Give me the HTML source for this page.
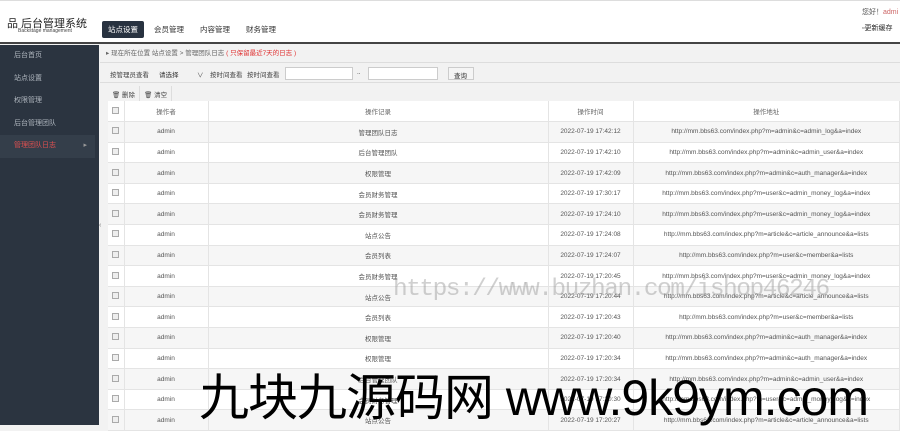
<!DOCTYPE html>
<html><head><meta charset="utf-8"><style>
*{margin:0;padding:0;box-sizing:border-box}
body{width:900px;height:425px;overflow:hidden;background:#f2f2f2;font-family:"Liberation Sans","Noto Sans CJK SC",sans-serif;font-size:7px;color:#333;position:relative}
.hdr{position:absolute;left:0;top:0;width:900px;height:44px;background:#fff;border-top:1px solid #ddd;border-bottom:2px solid #444}
.logo{position:absolute;left:7px;top:14px;font-size:11px;color:#222}
.logo small{position:absolute;left:11px;top:13px;font-size:5px;color:#444;white-space:nowrap}
.nav{position:absolute;left:102px;top:20px;display:flex;font-size:7.5px}
.nav span{padding:3px 6px;margin-right:4px;color:#333}
.nav .on{background:#283240;color:#fff;border-radius:2px}
.usr{position:absolute;left:862px;top:6px;font-size:7px;color:#555}
.usr b{color:#c66;font-weight:normal}
.upd{position:absolute;left:862px;top:22px;font-size:7px;color:#222}
.side{position:absolute;left:0;top:45px;width:99px;height:380px;background:#2b3440}
.side div{height:22.5px;line-height:22px;padding-left:14px;color:#aeb5bd;font-size:7px}
.side .act{background:#343e4a;color:#e05050;width:95px;position:relative}
.side .act:after{content:"▸";position:absolute;right:8px;color:#999}
.bc{position:absolute;left:106px;top:47px;font-size:6.5px;color:#666}
.bc i{color:#e03030;font-style:normal}
.flt{position:absolute;left:100px;top:62px;width:800px;height:21px;border-top:1px solid #ddd;border-bottom:1px solid #ddd;background:#f2f2f2}
.flt span{position:absolute;top:6px;font-size:6.5px;color:#444}
.inp{position:absolute;top:4px;height:13px;background:#fff;border:1px solid #ccc}
.tb{position:absolute;left:108px;top:86px;font-size:6.5px;color:#444}
.tb span{display:inline-block;padding:3px 4px;border-right:1px solid #ddd}
table{position:absolute;left:108px;top:101px;width:792px;border-collapse:collapse;background:#fff}
td,th{height:20.6px;border-bottom:1px solid #e4e4e4;border-right:1px solid #e4e4e4;text-align:center;font-weight:normal;font-size:6.5px;color:#555;white-space:nowrap}
th{background:#fff;color:#666}
tr:nth-child(even) td{background:#f6f6f6}
.cb{display:inline-block;width:7px;height:7px;border:1px solid #aaa;background:#eee}
.wm{position:absolute;left:393px;top:276px;font-family:"Liberation Mono",monospace;font-size:24.5px;color:rgba(150,150,150,.45);letter-spacing:-1.5px;white-space:nowrap}
.big{position:absolute;left:199px;top:358px;font-size:50px;color:#000;white-space:nowrap;letter-spacing:-1px}
</style></head><body>
<div class="hdr">
<div class="logo">品 后台管理系统<small>Backstage management</small></div>
<div class="nav"><span class="on">站点设置</span><span>会员管理</span><span>内容管理</span><span>财务管理</span></div>
<div class="usr">您好！<b>admi</b></div>
<div class="upd">▫更新缓存</div>
</div>
<div class="side"><div>后台首页</div><div>站点设置</div><div>权限管理</div><div>后台管理团队</div><div class="act">管理团队日志</div></div>
<div style="position:absolute;left:99px;top:222px;font-size:7px;color:#777">‹</div>
<div class="bc">▸ 现在所在位置 站点设置 &gt; 管理团队日志 <i>( 只保留最近7天的日志 )</i></div>
<div class="flt">
<span style="left:10px">按管理员查看</span><div class="inp" style="left:55px;width:50px;border:none;background:#f2f2f2;padding:2px 4px;font-size:6.5px">请选择 <span style="left:42px;top:2px">∨</span></div>
<span style="left:110px">按时间查看</span><span style="left:147px">按时间查看</span>
<div class="inp" style="left:185px;width:68px"></div><span style="left:257px">..</span>
<div class="inp" style="left:268px;width:70px"></div>
<div class="inp" style="left:348px;width:26px;background:#f5f5f5;font-size:6.5px;padding:2px 5px">查询</div>
</div>
<div class="tb"><span>🗑 删除</span><span>🗑 清空</span></div>
<table>
<tr><th style="width:16px"><span class="cb"></span></th><th style="width:84px">操作者</th><th style="width:340px">操作记录</th><th style="width:85px">操作时间</th><th>操作地址</th></tr>
<tr><td><span class="cb"></span></td><td>admin</td><td>管理团队日志</td><td>2022-07-19 17:42:12</td><td>http://mm.bbs63.com/index.php?m=admin&amp;c=admin_log&amp;a=index</td></tr>
<tr><td><span class="cb"></span></td><td>admin</td><td>后台管理团队</td><td>2022-07-19 17:42:10</td><td>http://mm.bbs63.com/index.php?m=admin&amp;c=admin_user&amp;a=index</td></tr>
<tr><td><span class="cb"></span></td><td>admin</td><td>权限管理</td><td>2022-07-19 17:42:09</td><td>http://mm.bbs63.com/index.php?m=admin&amp;c=auth_manager&amp;a=index</td></tr>
<tr><td><span class="cb"></span></td><td>admin</td><td>会员财务管理</td><td>2022-07-19 17:30:17</td><td>http://mm.bbs63.com/index.php?m=user&amp;c=admin_money_log&amp;a=index</td></tr>
<tr><td><span class="cb"></span></td><td>admin</td><td>会员财务管理</td><td>2022-07-19 17:24:10</td><td>http://mm.bbs63.com/index.php?m=user&amp;c=admin_money_log&amp;a=index</td></tr>
<tr><td><span class="cb"></span></td><td>admin</td><td>站点公告</td><td>2022-07-19 17:24:08</td><td>http://mm.bbs63.com/index.php?m=article&amp;c=article_announce&amp;a=lists</td></tr>
<tr><td><span class="cb"></span></td><td>admin</td><td>会员列表</td><td>2022-07-19 17:24:07</td><td>http://mm.bbs63.com/index.php?m=user&amp;c=member&amp;a=lists</td></tr>
<tr><td><span class="cb"></span></td><td>admin</td><td>会员财务管理</td><td>2022-07-19 17:20:45</td><td>http://mm.bbs63.com/index.php?m=user&amp;c=admin_money_log&amp;a=index</td></tr>
<tr><td><span class="cb"></span></td><td>admin</td><td>站点公告</td><td>2022-07-19 17:20:44</td><td>http://mm.bbs63.com/index.php?m=article&amp;c=article_announce&amp;a=lists</td></tr>
<tr><td><span class="cb"></span></td><td>admin</td><td>会员列表</td><td>2022-07-19 17:20:43</td><td>http://mm.bbs63.com/index.php?m=user&amp;c=member&amp;a=lists</td></tr>
<tr><td><span class="cb"></span></td><td>admin</td><td>权限管理</td><td>2022-07-19 17:20:40</td><td>http://mm.bbs63.com/index.php?m=admin&amp;c=auth_manager&amp;a=index</td></tr>
<tr><td><span class="cb"></span></td><td>admin</td><td>权限管理</td><td>2022-07-19 17:20:34</td><td>http://mm.bbs63.com/index.php?m=admin&amp;c=auth_manager&amp;a=index</td></tr>
<tr><td><span class="cb"></span></td><td>admin</td><td>后台管理团队</td><td>2022-07-19 17:20:34</td><td>http://mm.bbs63.com/index.php?m=admin&amp;c=admin_user&amp;a=index</td></tr>
<tr><td><span class="cb"></span></td><td>admin</td><td>会员财务管理</td><td>2022-07-19 17:20:30</td><td>http://mm.bbs63.com/index.php?m=user&amp;c=admin_money_log&amp;a=index</td></tr>
<tr><td><span class="cb"></span></td><td>admin</td><td>站点公告</td><td>2022-07-19 17:20:27</td><td>http://mm.bbs63.com/index.php?m=article&amp;c=article_announce&amp;a=lists</td></tr>
</table>
<div class="wm">https://www.buzhan.com/ishop46246</div>
<div class="big">九块九源码网 www.9k9ym.com</div>
</body></html>
